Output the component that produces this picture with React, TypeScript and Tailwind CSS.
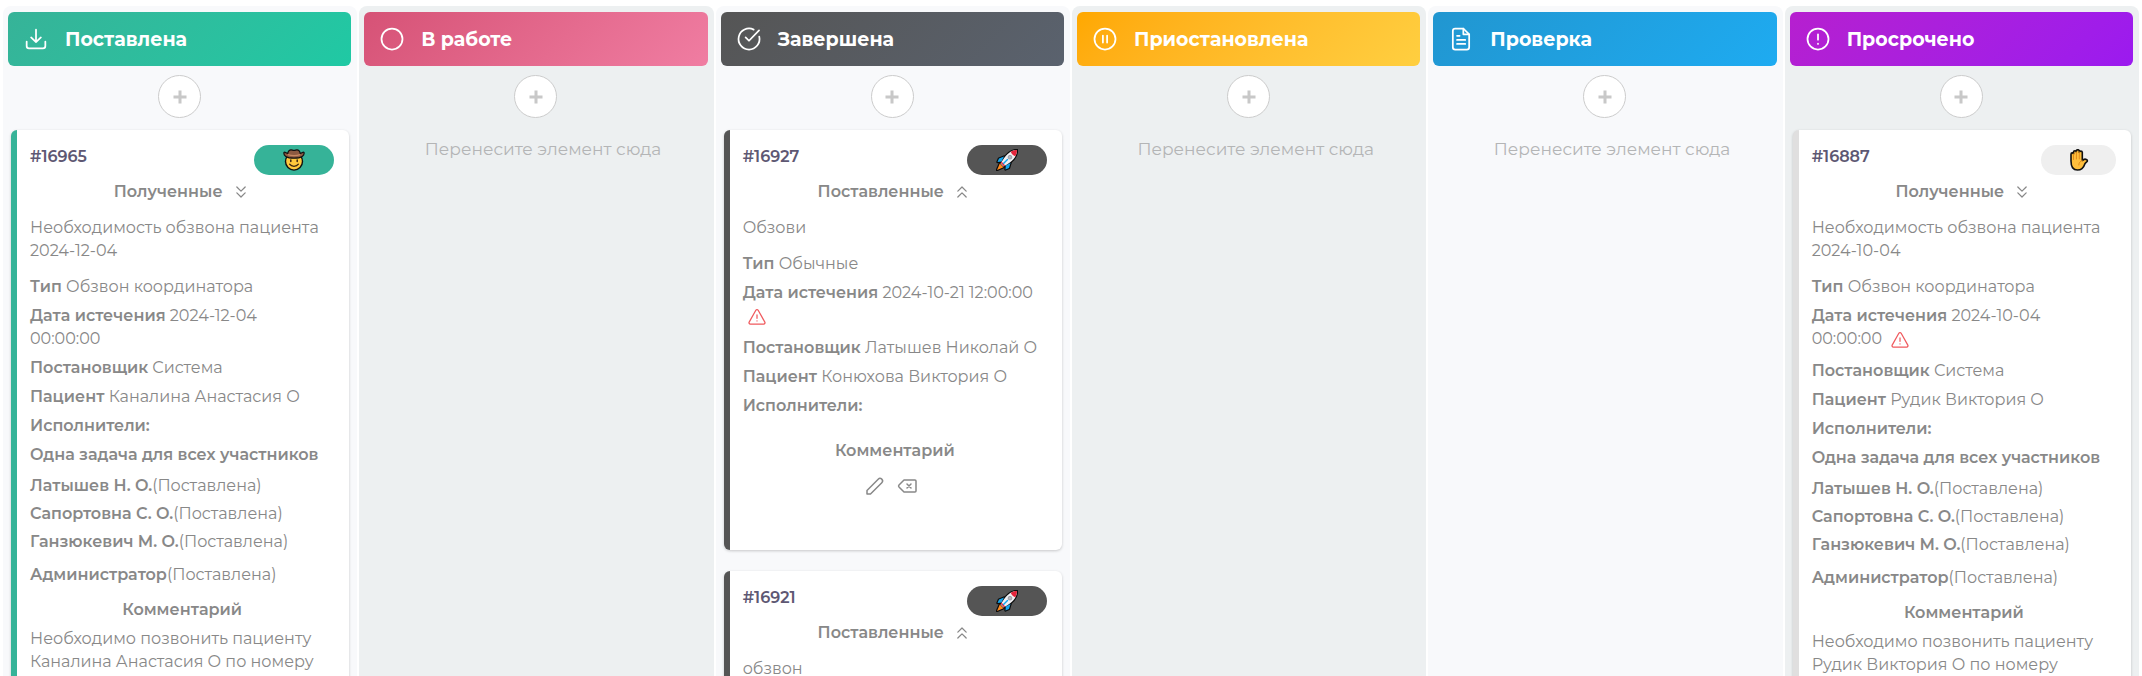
import type { ReactNode } from "react";
import { ChevronsDown, ChevronsUp } from "lucide-react";

type IconProps = { className?: string; children: ReactNode };

function Glyph({ className, children }: IconProps) {
  return (
    <svg
      viewBox="0 0 24 24"
      fill="none"
      stroke="currentColor"
      strokeWidth="1.5"
      strokeLinecap="round"
      strokeLinejoin="round"
      aria-hidden="true"
      className={className}
    >
      {children}
    </svg>
  );
}

const headerGlyphs: Record<string, ReactNode> = {
  download: (
    <>
      <path d="M12 4v10.6M7.8 10.7l4.2 4 4.2-4" />
      <path d="M4 14.2V18a2 2 0 0 0 2 2h12a2 2 0 0 0 2-2v-3.8" />
    </>
  ),
  circle: <circle cx="12" cy="12" r="9" />,
  check: (
    <>
      <path d="M20.8 10A9 9 0 1 1 16 3.94" />
      <path d="M9.1 10.6l2.9 2.9 8.6-8.8" />
    </>
  ),
  pause: (
    <>
      <circle cx="12" cy="12" r="9" />
      <path d="M10.2 9v6M13.8 9v6" />
    </>
  ),
  file: (
    <>
      <path d="M14 3H7a2 2 0 0 0-2 2v14a2 2 0 0 0 2 2h10a2 2 0 0 0 2-2V8z" />
      <path d="M14 3v5h5M8.6 9.3h2.2M8.6 12.8h7M8.6 16.2h7" />
    </>
  ),
  alert: (
    <>
      <circle cx="12" cy="12" r="9" />
      <path d="M12 8v4.6M12 16v.2" />
    </>
  ),
};

function Warning() {
  return (
    <Glyph className="mx-1 my-[3px] inline-block size-5 align-middle text-[#f05a5e]">
      <path d="M12 9.5v4M12 16.6v.1" />
      <path d="M10.6 3.9L2.6 18.1A1.6 1.6 0 0 0 4 20.5h16a1.6 1.6 0 0 0 1.4-2.4l-8-14.2a1.6 1.6 0 0 0-2.8 0z" />
    </Glyph>
  );
}

function Cowboy() {
  return (
    <svg viewBox="0 0 22 22" className="size-[22px]" aria-hidden="true">
      <circle cx="11" cy="12.600" r="8.500" fill="#ffc83d" stroke="#111" strokeWidth="1.4" />
      <path
        d="M1 3.300C.2 6.400 3.200 9.200 11 9.200S21.800 6.400 21 3.300c-.8-.9-2 .6-3.700 1.200C16.700 2 15.500.8 14 .8c-1.200 0-1.600.6-3 .6S9.200.8 8 .8C6.500.8 5.300 2 4.700 4.500 3 3.900 1.800 2.400 1 3.300z"
        fill="#8d5a41"
        stroke="#111"
        strokeWidth="1.2"
        strokeLinejoin="round"
      />
      <path d="M5 4.900c3.800 1.500 8.200 1.500 12 0l.3 1.300c-3.900 1.400-8.700 1.400-12.600 0z" fill="#c98a63" />
      <path d="M7.800 10.900v1.700M14.200 10.900v1.700" stroke="#3a2412" strokeWidth="1.5" strokeLinecap="round" />
      <path d="M6.600 15.200c2 2.800 6.800 2.800 8.800 0" fill="none" stroke="#3a2412" strokeWidth="1.300" strokeLinecap="round" />
    </svg>
  );
}

function Rocket() {
  return (
    <svg viewBox="0 0 22 22" className="size-[22px]" aria-hidden="true">
      <g stroke="#0c0c0c" strokeWidth="2.400" strokeLinejoin="round">
        <path d="M8 7.500L3 9.500 1.500 13l4-.5zM14.500 14l-1.500 5-3.500 1.500.3-4z" fill="#0c0c0c" />
        <path d="M3.800 14.500L1 21l6.500-2.800z" fill="#0c0c0c" />
        <path d="M21 1c-5 0-10 3-14.500 10.500L4.500 14.500l3 3 3.500-2C18.500 11 21 6 21 1z" fill="#0c0c0c" />
      </g>
      <path d="M8 7.500L3 9.500 1.500 13l4-.5zM14.500 14l-1.500 5-3.500 1.500.3-4z" fill="#12a5ee" />
      <path d="M3.800 14.500L1 21l6.500-2.800z" fill="#ff8a1f" />
      <path d="M21 1c-5 0-10 3-14.500 10.500L4.500 14.500l3 3 3.500-2C18.500 11 21 6 21 1z" fill="#f1f1f4" />
      <path d="M21 1c-2.200 0-4.300.6-6.300 1.700.8 2.300 2.300 3.800 4.600 4.600C20.400 5.300 21 3.200 21 1z" fill="#e5243b" />
      <path d="M4.800 14l3.200 3.200 1.200-.8-3.500-3.700z" fill="#e5243b" />
      <path d="M7.500 14.500l4-4" stroke="#12a5ee" strokeWidth="1.400" strokeLinecap="round" />
      <circle cx="14" cy="8.200" r="1.900" fill="#b5b5bd" stroke="#8c8c96" strokeWidth=".7" />
    </svg>
  );
}

function Hand() {
  return (
    <svg viewBox="0 0 22 22" className="size-[22px]" aria-hidden="true">
      <path
        d="M3 12V5.200c0-1.700 2.300-1.700 2.500-.2V3c0-1.700 2.700-1.700 2.800 0V2c0-1.700 2.900-1.700 3 0v1.200c.1-1.500 2.900-1.500 3 .1v8.200l1.500-1c1.500-.9 4 .2 3.500 1.700-.2.700-2 1.500-2.700 3.200C15.500 19 13 21 9.500 21 5 21 3 18 3 12z"
        fill="#ffbf3c"
        stroke="#111"
        strokeWidth="1.600"
        strokeLinejoin="round"
      />
      <path d="M5.500 5v5.500M8.400 3v7M11.300 3v7M14.200 11.500c-2.200.8-3.400 2.400-3.400 4.500" fill="none" stroke="#e08a1b" strokeWidth="1" strokeLinecap="round" />
    </svg>
  );
}

type Task = {
  id: string;
  direction: "in" | "out";
  emoji: ReactNode;
  border: string;
  pill: string;
  title: string;
  kind?: string;
  due?: string;
  overdue?: boolean;
  author?: string;
  patient?: string;
  shared?: string[];
  comment?: string;
};

const assignees = ["Латышев Н. О.", "Сапортовна С. О.", "Ганзюкевич М. О."];

function Field({ label, children }: { label: string; children?: ReactNode }) {
  return (
    <p>
      <b className="font-semibold">{label}</b> {children}
    </p>
  );
}

function Card({ task }: { task: Task }) {
  const Chevrons = task.direction === "in" ? ChevronsDown : ChevronsUp;
  return (
    <article
      className={`rounded-md border-l-6 bg-white pt-[15px] pr-[15px] pb-[52px] pl-[13px] shadow-[0_1px_3px_rgba(0,0,0,0.2)] ${task.border}`}
    >
      <div className="flex items-start justify-between">
        <h3 className="font-semibold text-[#5e5873]">{task.id}</h3>
        <span className={`flex h-[30px] items-center justify-center rounded-full ${task.pill}`}>{task.emoji}</span>
      </div>
      <button type="button" className="mx-auto mt-[5px] flex items-center gap-2 font-semibold">
        {task.direction === "in" ? "Полученные" : "Поставленные"}
        <Chevrons className="size-5" strokeWidth={1.5} aria-hidden="true" />
      </button>
      <p className="mt-[13px]">{task.title}</p>
      {task.kind && (
        <div className="mt-[13px] flex flex-col gap-[6px] pr-[6px]">
          <Field label="Тип">{task.kind}</Field>
          <p>
            <b className="font-semibold">Дата истечения</b> {task.due} {task.overdue && <Warning />}
          </p>
          <Field label="Постановщик">{task.author}</Field>
          <Field label="Пациент">{task.patient}</Field>
          <Field label="Исполнители:" />
          {task.shared && <Field label="Одна задача для всех участников" />}
        </div>
      )}
      {task.shared && (
        <ul className="mt-2 flex flex-col gap-[5px]">
          {task.shared.map((name) => (
            <li key={name}>
              <b className="font-semibold">{name}</b>(Поставлена)
            </li>
          ))}
          <li className="mt-[5px]">
            <b className="font-semibold">Администратор</b>(Поставлена)
          </li>
        </ul>
      )}
      {task.kind && (
        <h4 className={`text-center font-semibold ${task.shared ? "mt-3" : "mt-[22px]"}`}>Комментарий</h4>
      )}
      {task.comment && <p className="mt-[6px]">{task.comment}</p>}
      {task.kind && !task.comment && (
        <div className="mt-3 mr-2 flex justify-center gap-2">
          <button type="button" aria-label="Редактировать">
            <Glyph className="size-6">
              <path d="M4 20v-3.500L15.200 5.200a2.400 2.400 0 0 1 3.600 3.500L7.500 20z" />
            </Glyph>
          </button>
          <button type="button" aria-label="Удалить">
            <Glyph className="size-6">
              <path d="M20 6a1 1 0 0 1 1 1v10a1 1 0 0 1-1 1H9l-5-5a1.500 1.500 0 0 1 0-2l5-5z" />
              <path d="M12 10l4 4m0-4l-4 4" />
            </Glyph>
          </button>
        </div>
      )}
    </article>
  );
}

type Column = { title: string; icon: string; header: string; tasks: Task[] };

const columns: Column[] = [
  {
    title: "Поставлена",
    icon: "download",
    header: "from-[#36b398] to-[#1fc9a4]",
    tasks: [
      {
        id: "#16965",
        direction: "in",
        emoji: <Cowboy />,
        border: "border-[#36b398]",
        pill: "w-20 bg-[#36b398]",
        title: "Необходимость обзвона пациента 2024-12-04",
        kind: "Обзвон координатора",
        due: "2024-12-04 00:00:00",
        author: "Система",
        patient: "Каналина Анастасия О",
        shared: assignees,
        comment: "Необходимо позвонить пациенту Каналина Анастасия О по номеру",
      },
    ],
  },
  { title: "В работе", icon: "circle", header: "from-[#d65276] to-[#f07da2]", tasks: [] },
  {
    title: "Завершена",
    icon: "check",
    header: "from-[#555555] to-[#5a626e]",
    tasks: [
      {
        id: "#16927",
        direction: "out",
        emoji: <Rocket />,
        border: "border-[#555555]",
        pill: "w-20 bg-[#555555]",
        title: "Обзови",
        kind: "Обычные",
        due: "2024-10-21 12:00:00",
        overdue: true,
        author: "Латышев Николай О",
        patient: "Конюхова Виктория О",
      },
      {
        id: "#16921",
        direction: "out",
        emoji: <Rocket />,
        border: "border-[#555555]",
        pill: "w-20 bg-[#555555]",
        title: "обзвон",
      },
    ],
  },
  { title: "Приостановлена", icon: "pause", header: "from-[#ffa800] to-[#ffcf40]", tasks: [] },
  { title: "Проверка", icon: "file", header: "from-[#2196d0] to-[#1eabf1]", tasks: [] },
  {
    title: "Просрочено",
    icon: "alert",
    header: "from-[#b61fcf] to-[#9b1aef]",
    tasks: [
      {
        id: "#16887",
        direction: "in",
        emoji: <Hand />,
        border: "border-[#e0dfdf]",
        pill: "w-[75px] bg-[#efefef]",
        title: "Необходимость обзвона пациента 2024-10-04",
        kind: "Обзвон координатора",
        due: "2024-10-04 00:00:00",
        overdue: true,
        author: "Система",
        patient: "Рудик Виктория О",
        shared: assignees,
        comment: "Необходимо позвонить пациенту Рудик Виктория О по номеру",
      },
    ],
  },
];

export default function App() {
  return (
    <main className="grid h-screen grid-cols-6 gap-[2px] overflow-hidden bg-white px-[3px] pt-[6px] font-['Montserrat','Inter',sans-serif] text-base leading-[23px] text-[#888888]">
      {columns.map((column) => (
        <section
          key={column.title}
          className="min-w-0 rounded-t-lg bg-[#edf0f1] pt-[6px] pr-[6px] pl-[5px] odd:bg-[#f8f9fb]"
        >
          <header
            className={`flex h-[54px] items-center gap-[15px] rounded-md bg-linear-135 px-[14px] text-white ${column.header}`}
          >
            <Glyph className="size-7 shrink-0">{headerGlyphs[column.icon]}</Glyph>
            <h2 className="text-[19px] font-bold">{column.title}</h2>
          </header>
          <button
            type="button"
            aria-label="Добавить"
            className="mx-auto mt-[9px] flex size-[43px] items-center justify-center rounded-full border border-[#cccccc] bg-white text-[#c8c8c8]"
          >
            <svg viewBox="0 0 14 14" className="size-[14px]" stroke="currentColor" strokeWidth="3" aria-hidden="true">
              <path d="M7 .5v13M.5 7h13" />
            </svg>
          </button>
          {column.tasks.length === 0 ? (
            <p className="mt-5 pl-[14px] text-center text-[17px] leading-[23px] text-[#b4b5b6]">
              Перенесите элемент сюда
            </p>
          ) : (
            <div className="mt-3 flex flex-col gap-[21px] pr-[2px] pl-[3px]">
              {column.tasks.map((task) => (
                <Card key={task.id} task={task} />
              ))}
            </div>
          )}
        </section>
      ))}
    </main>
  );
}
